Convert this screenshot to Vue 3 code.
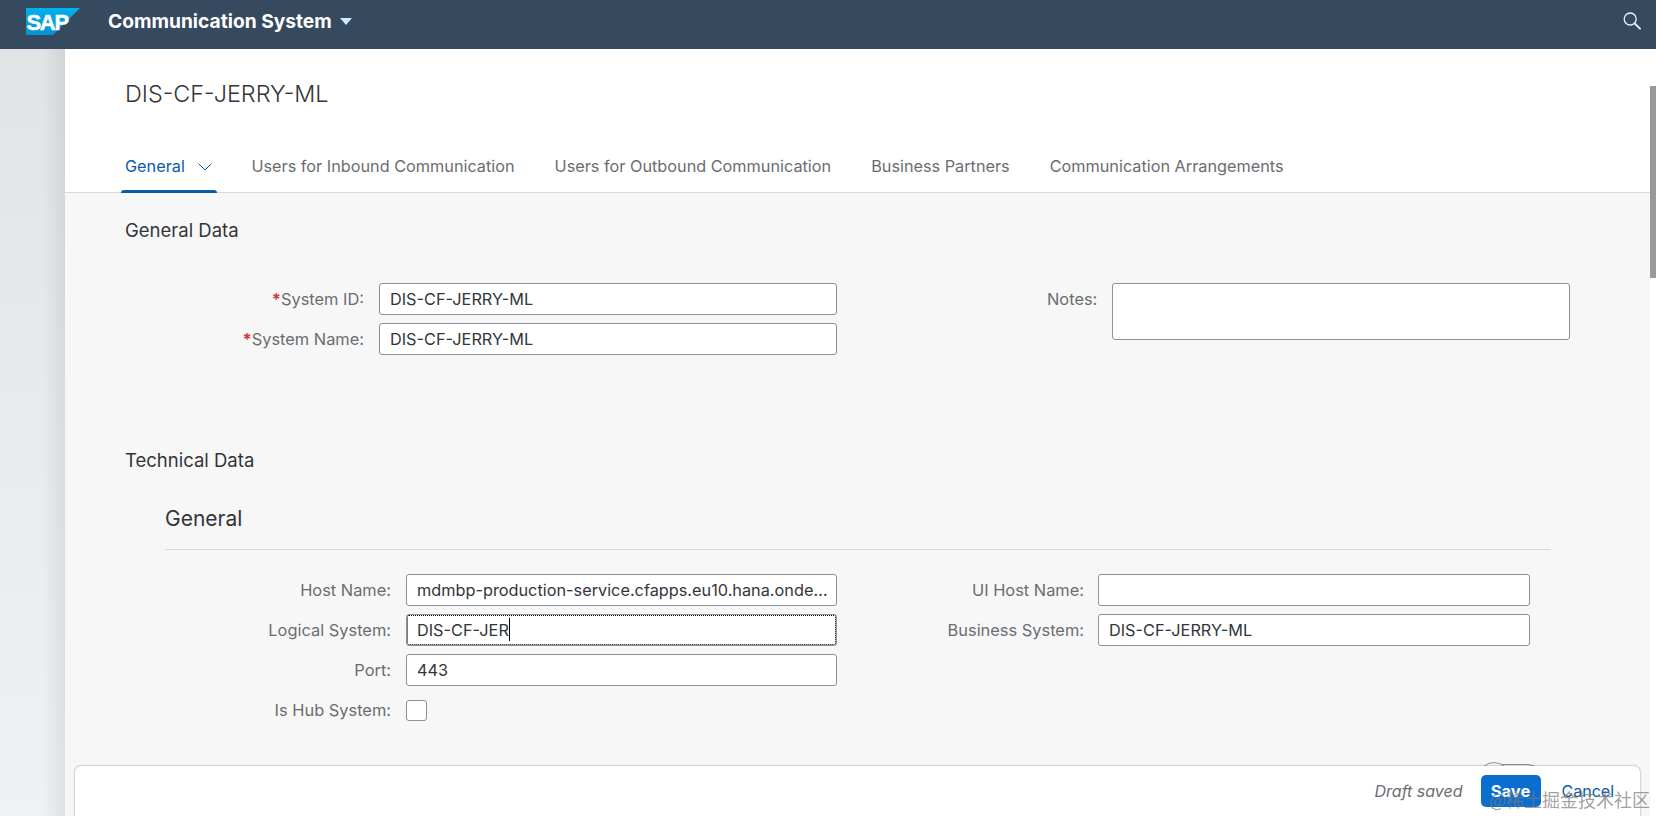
<script setup>
const tabs = ['Users for Inbound Communication', 'Users for Outbound Communication', 'Business Partners', 'Communication Arrangements']
const leftTech = [
  { label: 'Host Name:', value: 'mdmbp-production-service.cfapps.eu10.hana.ondemand.com' },
  { label: 'Logical System:', value: 'DIS-CF-JER', focus: true },
  { label: 'Port:', value: '443' }
]
const rightTech = [
  { label: 'UI Host Name:', value: '' },
  { label: 'Business System:', value: 'DIS-CF-JERRY-ML' }
]
</script>

<template>
  <div class="app">
    <header class="shell">
      <div class="logo"><svg width="54" height="27" viewBox="0 0 54 27">
        <defs><linearGradient id="sapg" x1="0" y1="0" x2="0" y2="1"><stop offset="0" stop-color="#00b1eb"/><stop offset="1" stop-color="#0a8fd6"/></linearGradient></defs>
        <polygon points="0,0 54,0 27,27 0,27" fill="url(#sapg)"/>
        <text x="0.5" y="21.5" class="logo-text">SAP</text>
      </svg></div>
      <div class="app-title">Communication System</div>
      <span class="caret"></span>
      <svg class="search" width="20" height="20" viewBox="0 0 20 20" fill="none">
        <circle cx="8.2" cy="8" r="6" stroke="#e8f3ff" stroke-width="1.3"/>
        <path d="M12.6 12.4 L18 17.6" stroke="#e8f3ff" stroke-width="2" stroke-linecap="round"/>
      </svg>
    </header>
    <div class="stage">
      <div class="gutter"></div>
      <main class="page">
        <section class="head">
          <h1 class="title">DIS-CF-JERRY-ML</h1>
          <nav class="tabs">
            <div class="tab active">General
              <svg width="16" height="10" viewBox="0 0 16 10" fill="none"><path d="M1.5 1.5 L8 8 L14.5 1.5" stroke="#0a5ba8" stroke-width="1"/></svg>
            </div>
            <div class="tab" v-for="t in tabs" :key="t">{{ t }}</div>
          </nav>
        </section>
        <section class="content">
          <h2 class="section-title">General Data</h2>
          <div class="general-grid">
            <div class="col">
              <div class="row id-row"><label class="lab"><i>*</i>System ID:</label><div class="input wide">DIS-CF-JERRY-ML</div></div>
              <div class="row id-row"><label class="lab"><i>*</i>System Name:</label><div class="input wide">DIS-CF-JERRY-ML</div></div>
            </div>
            <div class="notes">
              <label class="lab notes-lab">Notes:</label>
              <div class="input area"></div>
            </div>
          </div>
          <h2 class="section-title tech">Technical Data</h2>
          <div class="sub">
            <h3 class="sub-title">General</h3>
            <div class="tech-grid">
              <div class="col">
                <div class="row tl" v-for="f in leftTech" :key="f.label">
                  <label class="lab">{{ f.label }}</label>
                  <div class="input tw" :class="{ focus: f.focus }"><span class="val">{{ f.value }}</span><span v-if="f.focus" class="cursor"></span></div>
                </div>
                <div class="row tl"><label class="lab">Is Hub System:</label><div class="check"></div></div>
              </div>
              <div class="col right">
                <div class="row tr" v-for="f in rightTech" :key="f.label">
                  <label class="lab">{{ f.label }}</label>
                  <div class="input tw tw-r"><span class="val">{{ f.value }}</span></div>
                </div>
              </div>
            </div>
          </div>
        </section>
        <div class="toggle-peek"><span class="knob"></span></div>
        <footer class="footer">
          <span class="draft">Draft saved</span>
          <button class="save">Save</button>
          <button class="cancel">Cancel</button>
        </footer>
        <div class="watermark">@稀土掘金技术社区</div>
      </main>
      <div class="scrolltrack"><div class="thumb"></div></div>
    </div>
  </div>
</template>

<style>
html, body { margin: 0; overflow: hidden; }
</style>

<style scoped>
.app { width: 1656px; height: 816px; overflow: hidden; display: flex; flex-direction: column; font-family: Inter, "Noto Sans", sans-serif; color: #32363a; font-size: 16.3px; }
.shell { height: 49px; flex: none; background: #354a5f; display: flex; align-items: center; color: #fff; padding: 0 14px 0 26px; box-sizing: border-box; }
.logo { width: 54px; height: 27px; margin-top: -6px; }
.logo svg { display: block; }
.logo-text { font: bold 22px "Liberation Sans", sans-serif; fill: #fff; stroke: #fff; stroke-width: .5px; letter-spacing: -1.3px; }
.app-title { margin-left: 28px; margin-top: -7px; font-size: 19.2px; font-weight: 700; }
.caret { width: 0; height: 0; margin: -7px 0 0 8px; border-left: 6.5px solid transparent; border-right: 6.5px solid transparent; border-top: 7px solid #d1e8ff; }
.search { margin-left: auto; margin-top: -7px; }
.stage { flex: 1; display: flex; min-height: 0; }
.gutter { width: 65px; flex: none; background: linear-gradient(90deg, transparent 65%, rgba(0,0,0,.07) 100%), linear-gradient(180deg, #e1e4e4, #f0f1f3); }
.page { position: relative; flex: 1; background: #f7f7f7; overflow: hidden; }
.head { background: #fff; height: 144px; box-sizing: border-box; padding: 29px 0 0 60px; border-bottom: 1px solid #d9d9d9; }
.title { margin: 0; font-size: 23.4px; font-weight: 300; line-height: 32px; }
.tabs { display: flex; margin-top: 44px; gap: 40px; color: #6a6d70; }
.tab { line-height: 24px; height: 39px; box-sizing: border-box; white-space: nowrap; font-size: 16.25px; }
.tab.active { position: relative; color: #0a5ba8; margin-right: -2px; }
.tab.active svg { margin-left: 8px; }
.tab.active::after { content: ""; position: absolute; left: -4px; right: -4px; bottom: 0; height: 3px; border-radius: 3px 3px 0 0; background: #0a5ba8; }
.content { padding: 0 0 0 60px; }
.section-title { margin: 0; font-size: 18.5px; font-weight: 400; line-height: 24px; padding-top: 25px; }
.general-grid { display: flex; margin-top: 41px; }
.col { display: flex; flex-direction: column; gap: 8px; }
.row { display: flex; align-items: center; height: 32px; }
.lab { color: #6a6d70; font-size: 16.4px; white-space: nowrap; text-align: right; flex: none; }
.lab i { color: #d9363e; font-style: normal; font-weight: 700; }
.id-row .lab { width: 239px; margin-right: 15px; }
.input { box-sizing: border-box; height: 32px; background: #fff; border: 1px solid #89919a; border-radius: 3px; padding: 0 10px; line-height: 30px; font-size: 16.3px; color: #32363a; white-space: nowrap; overflow: hidden; display: flex; }
.val { overflow: hidden; text-overflow: ellipsis; min-width: 0; }
.wide { width: 458px; }
.notes { display: flex; margin-left: 210px; }
.notes-lab { line-height: 32px; margin-right: 15px; }
.area { width: 458px; height: 57px; }
.section-title.tech { padding-top: 0; margin-top: 93px; }
.sub { margin: 21px 99px 0 40px; }
.sub-title { margin: 0; font-size: 21px; font-weight: 400; line-height: 30px; padding: 11px 0 15px; border-bottom: 1px solid #d4d6d8; }
.tech-grid { display: flex; margin-top: 24px; }
.tl .lab { width: 226px; margin-right: 15px; }
.tr .lab { width: 211px; margin-right: 14px; }
.right { margin-left: 36px; }
.tw { width: 431px; padding-right: 6px; }
.tw-r { width: 432px; }
.focus { outline: 1px dotted #000; outline-offset: -2px; }
.cursor { display: inline-block; width: 1px; height: 23px; background: #000; margin-top: 3px; }
.check { width: 21px; height: 21px; box-sizing: border-box; background: #fff; border: 1px solid #89919a; border-radius: 3px; }
.toggle-peek { position: absolute; left: 1415px; top: 715px; width: 63px; height: 30px; border: 1px solid #89919a; border-radius: 15px; box-sizing: border-box; }
.knob { position: absolute; left: -3px; top: -3px; width: 32px; height: 32px; box-sizing: border-box; border: 1px solid #89919a; border-radius: 50%; background: #f7f7f7; }
.footer { position: absolute; left: 10px; right: 10px; top: 717px; height: 60px; box-sizing: border-box; background: #fff; border-radius: 6px; box-shadow: 0 0 2px rgba(0,0,0,.5); display: flex; align-items: flex-start; padding: 9px 26px 0 0; justify-content: flex-end; }
.draft { font-style: italic; color: #6a6d70; line-height: 32px; margin-right: 18px; font-size: 16px; }
.save { width: 60px; height: 32px; border: 0; border-radius: 5px; background: #0a6ed1; color: #fff; font: 700 16.5px Inter, sans-serif; padding: 0; }
.cancel { border: 0; background: none; color: #0a5ba8; font: 16px Inter, sans-serif; padding: 0; margin-left: 21px; height: 32px; }
.watermark { position: absolute; right: 0; top: 737px; font-family: "Noto Sans CJK SC", sans-serif; font-size: 18px; color: rgba(120,120,120,.7); white-space: nowrap; }
.scrolltrack { width: 6px; flex: none; background: #fff; }
.thumb { margin-top: 37px; height: 192px; background: #999; }
</style>
